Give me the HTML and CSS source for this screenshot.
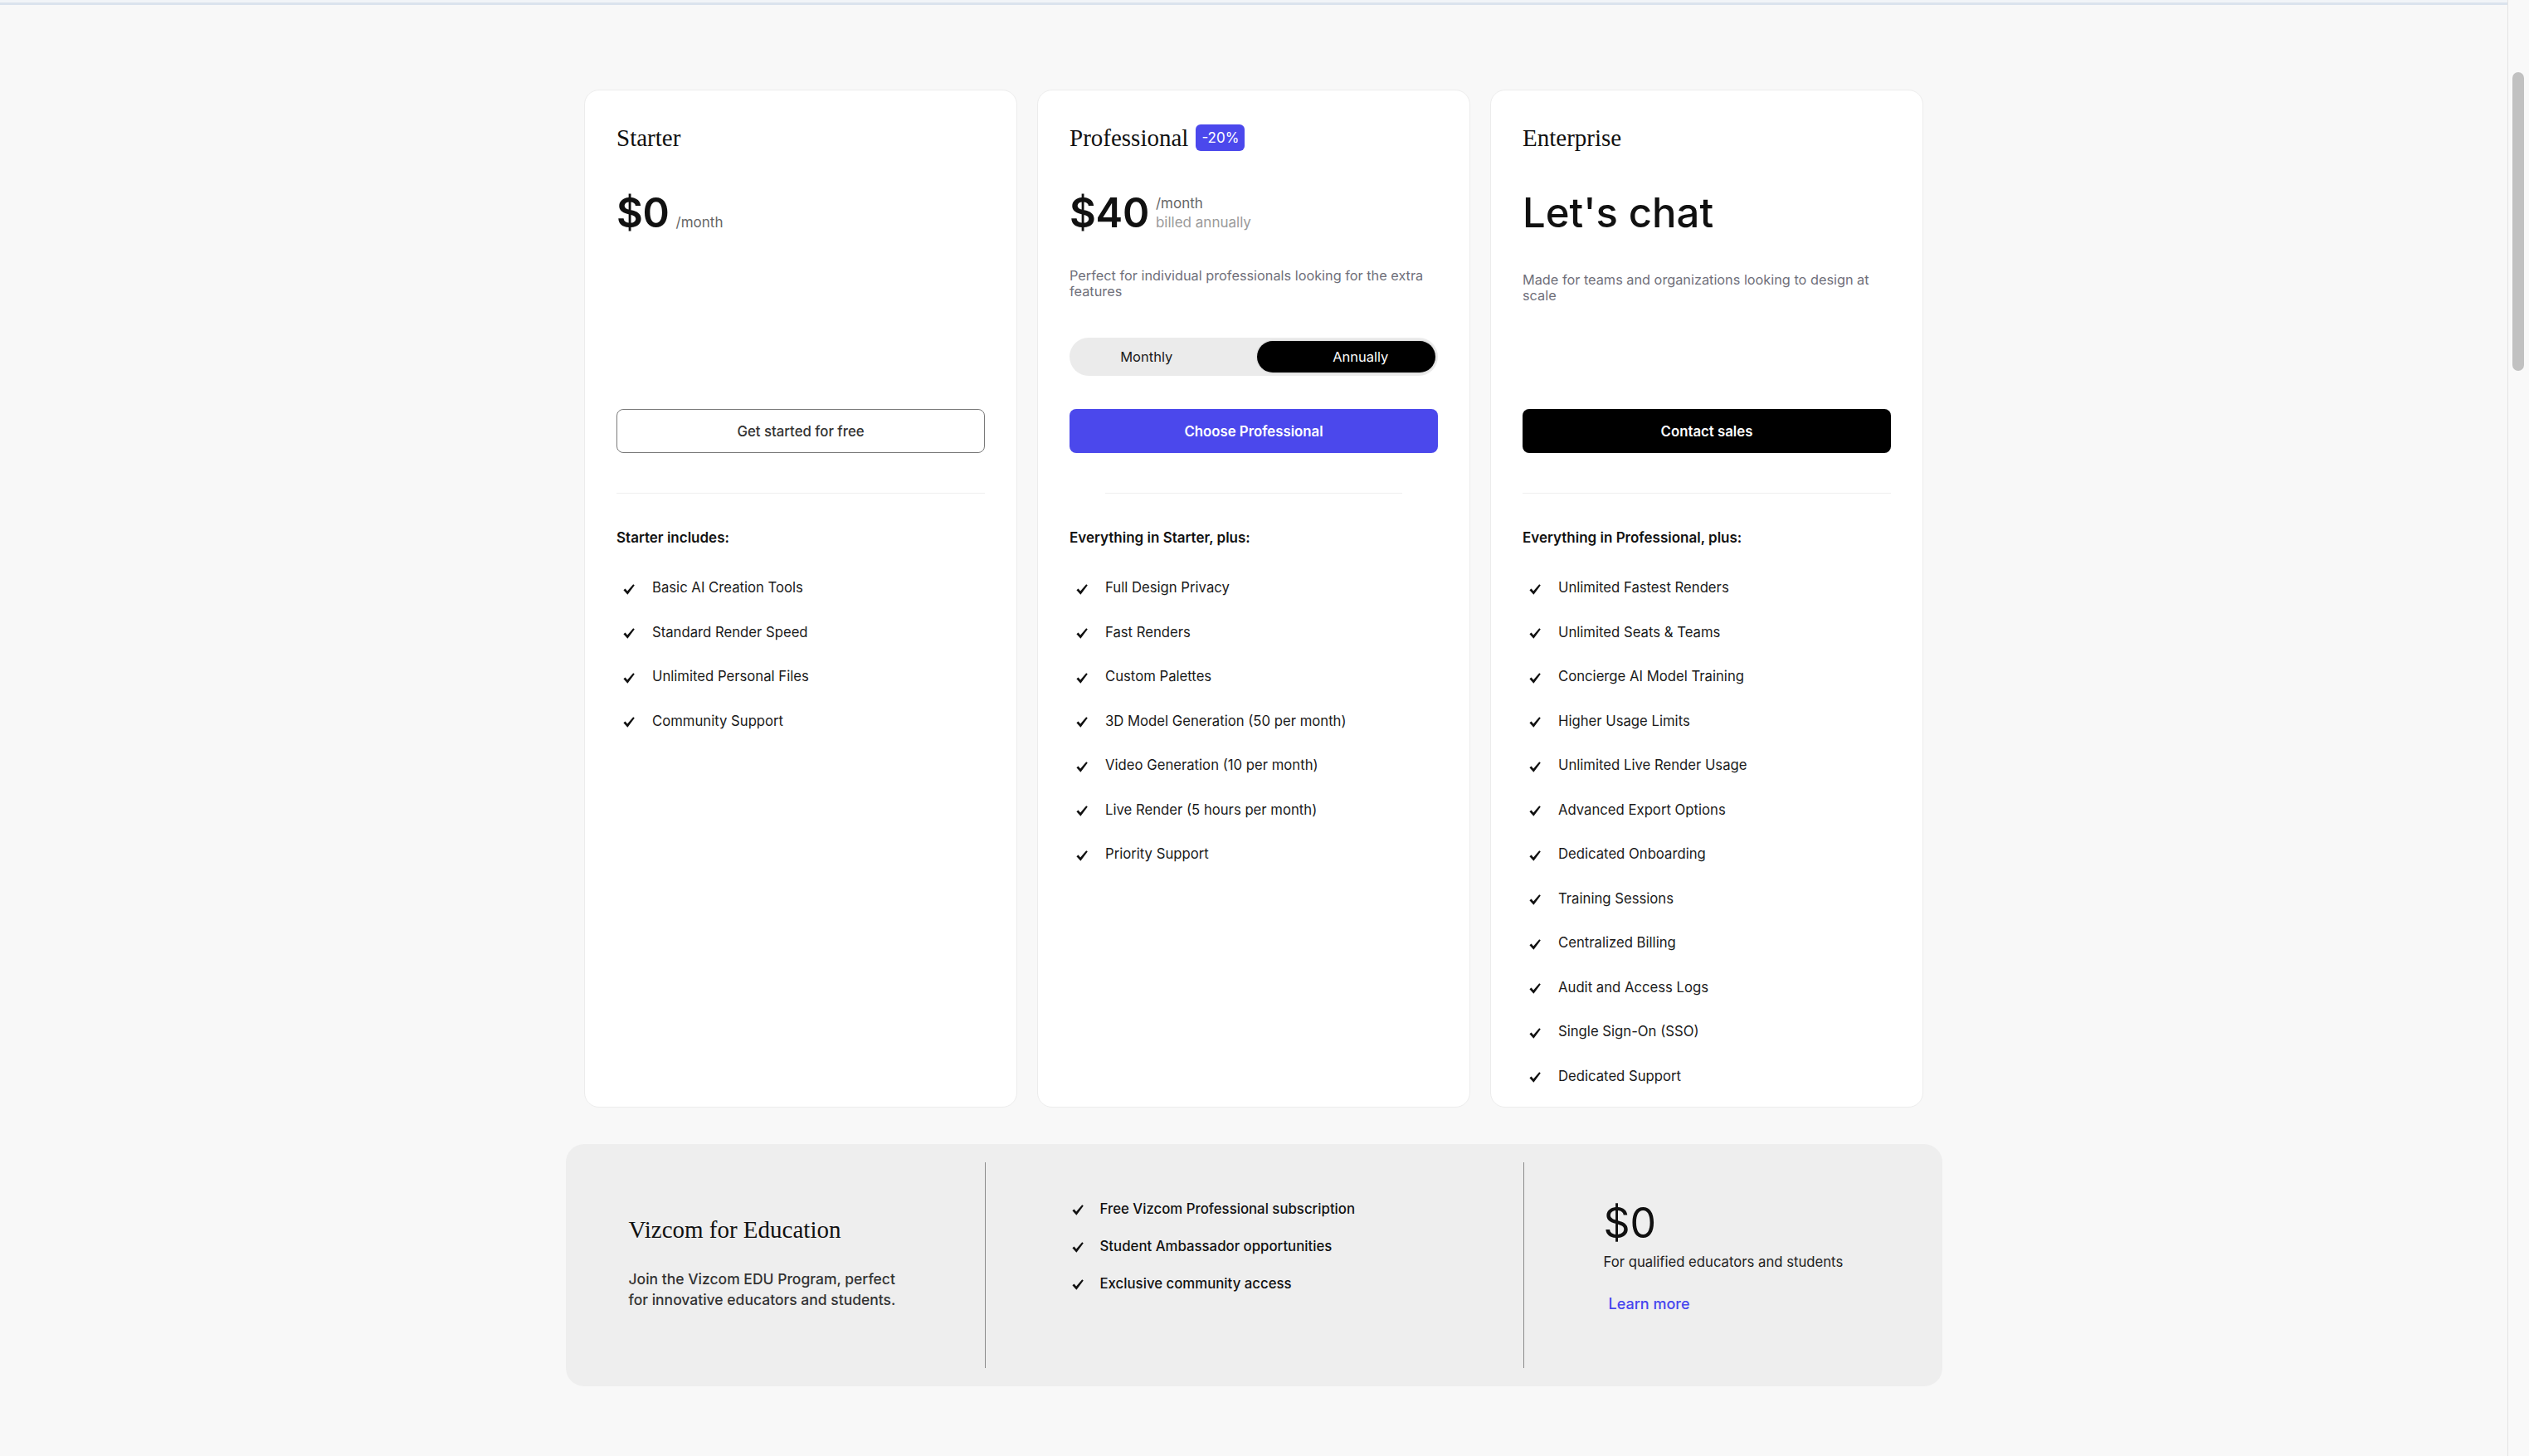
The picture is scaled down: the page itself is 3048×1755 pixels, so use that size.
FILE: index.html
```html
<!DOCTYPE html>
<html lang="en">
<head>
<meta charset="utf-8">
<title>Vizcom Pricing</title>
<link rel="stylesheet" href="styles.css">
</head>
<body>
<div class="topline"></div>
<main class="pricing">
  <section class="plans">
    <article class="plan">
      <div class="plan-head">
        <div class="plan-title-row"><h2 class="plan-title">Starter</h2></div>
        <div class="price-row">
          <span class="price">$0</span>
          <span class="price-suffix"><span>/month</span></span>
        </div>
      </div>
      <a class="btn btn-outline" href="#">Get started for free</a>
      <hr class="plan-divider">
      <h3 class="feat-heading">Starter includes:</h3>
      <ul class="features">
        <li><svg class="check" viewBox="0 0 14 13"><path d="M0.4 7.2 L2.6 5.5 L5.1 8.6 L12.2 0.2 L13.8 1.4 L5.4 12.7 Z"/></svg>Basic AI Creation Tools</li>
        <li><svg class="check" viewBox="0 0 14 13"><path d="M0.4 7.2 L2.6 5.5 L5.1 8.6 L12.2 0.2 L13.8 1.4 L5.4 12.7 Z"/></svg>Standard Render Speed</li>
        <li><svg class="check" viewBox="0 0 14 13"><path d="M0.4 7.2 L2.6 5.5 L5.1 8.6 L12.2 0.2 L13.8 1.4 L5.4 12.7 Z"/></svg>Unlimited Personal Files</li>
        <li><svg class="check" viewBox="0 0 14 13"><path d="M0.4 7.2 L2.6 5.5 L5.1 8.6 L12.2 0.2 L13.8 1.4 L5.4 12.7 Z"/></svg>Community Support</li>
      </ul>
    </article>

    <article class="plan">
      <div class="plan-head">
        <div class="plan-title-row"><h2 class="plan-title">Professional</h2><span class="badge">-20%</span></div>
        <div class="price-row">
          <span class="price">$40</span>
          <span class="price-suffix"><span>/month</span><span class="muted">billed annually</span></span>
        </div>
        <p class="plan-desc">Perfect for individual professionals looking for the extra features</p>
        <div class="toggle">
          <span class="toggle-opt toggle-left">Monthly</span>
          <span class="toggle-opt toggle-right active">Annually</span>
        </div>
      </div>
      <a class="btn btn-primary" href="#">Choose Professional</a>
      <hr class="plan-divider plan-divider-inset">
      <h3 class="feat-heading">Everything in Starter, plus:</h3>
      <ul class="features">
        <li><svg class="check" viewBox="0 0 14 13"><path d="M0.4 7.2 L2.6 5.5 L5.1 8.6 L12.2 0.2 L13.8 1.4 L5.4 12.7 Z"/></svg>Full Design Privacy</li>
        <li><svg class="check" viewBox="0 0 14 13"><path d="M0.4 7.2 L2.6 5.5 L5.1 8.6 L12.2 0.2 L13.8 1.4 L5.4 12.7 Z"/></svg>Fast Renders</li>
        <li><svg class="check" viewBox="0 0 14 13"><path d="M0.4 7.2 L2.6 5.5 L5.1 8.6 L12.2 0.2 L13.8 1.4 L5.4 12.7 Z"/></svg>Custom Palettes</li>
        <li><svg class="check" viewBox="0 0 14 13"><path d="M0.4 7.2 L2.6 5.5 L5.1 8.6 L12.2 0.2 L13.8 1.4 L5.4 12.7 Z"/></svg>3D Model Generation (50 per month)</li>
        <li><svg class="check" viewBox="0 0 14 13"><path d="M0.4 7.2 L2.6 5.5 L5.1 8.6 L12.2 0.2 L13.8 1.4 L5.4 12.7 Z"/></svg>Video Generation (10 per month)</li>
        <li><svg class="check" viewBox="0 0 14 13"><path d="M0.4 7.2 L2.6 5.5 L5.1 8.6 L12.2 0.2 L13.8 1.4 L5.4 12.7 Z"/></svg>Live Render (5 hours per month)</li>
        <li><svg class="check" viewBox="0 0 14 13"><path d="M0.4 7.2 L2.6 5.5 L5.1 8.6 L12.2 0.2 L13.8 1.4 L5.4 12.7 Z"/></svg>Priority Support</li>
      </ul>
    </article>

    <article class="plan">
      <div class="plan-head">
        <div class="plan-title-row"><h2 class="plan-title">Enterprise</h2></div>
        <div class="lets-chat">Let's chat</div>
        <p class="plan-desc plan-desc-ent">Made for teams and organizations looking to design at scale</p>
      </div>
      <a class="btn btn-dark" href="#">Contact sales</a>
      <hr class="plan-divider">
      <h3 class="feat-heading">Everything in Professional, plus:</h3>
      <ul class="features">
        <li><svg class="check" viewBox="0 0 14 13"><path d="M0.4 7.2 L2.6 5.5 L5.1 8.6 L12.2 0.2 L13.8 1.4 L5.4 12.7 Z"/></svg>Unlimited Fastest Renders</li>
        <li><svg class="check" viewBox="0 0 14 13"><path d="M0.4 7.2 L2.6 5.5 L5.1 8.6 L12.2 0.2 L13.8 1.4 L5.4 12.7 Z"/></svg>Unlimited Seats &amp; Teams</li>
        <li><svg class="check" viewBox="0 0 14 13"><path d="M0.4 7.2 L2.6 5.5 L5.1 8.6 L12.2 0.2 L13.8 1.4 L5.4 12.7 Z"/></svg>Concierge AI Model Training</li>
        <li><svg class="check" viewBox="0 0 14 13"><path d="M0.4 7.2 L2.6 5.5 L5.1 8.6 L12.2 0.2 L13.8 1.4 L5.4 12.7 Z"/></svg>Higher Usage Limits</li>
        <li><svg class="check" viewBox="0 0 14 13"><path d="M0.4 7.2 L2.6 5.5 L5.1 8.6 L12.2 0.2 L13.8 1.4 L5.4 12.7 Z"/></svg>Unlimited Live Render Usage</li>
        <li><svg class="check" viewBox="0 0 14 13"><path d="M0.4 7.2 L2.6 5.5 L5.1 8.6 L12.2 0.2 L13.8 1.4 L5.4 12.7 Z"/></svg>Advanced Export Options</li>
        <li><svg class="check" viewBox="0 0 14 13"><path d="M0.4 7.2 L2.6 5.5 L5.1 8.6 L12.2 0.2 L13.8 1.4 L5.4 12.7 Z"/></svg>Dedicated Onboarding</li>
        <li><svg class="check" viewBox="0 0 14 13"><path d="M0.4 7.2 L2.6 5.5 L5.1 8.6 L12.2 0.2 L13.8 1.4 L5.4 12.7 Z"/></svg>Training Sessions</li>
        <li><svg class="check" viewBox="0 0 14 13"><path d="M0.4 7.2 L2.6 5.5 L5.1 8.6 L12.2 0.2 L13.8 1.4 L5.4 12.7 Z"/></svg>Centralized Billing</li>
        <li><svg class="check" viewBox="0 0 14 13"><path d="M0.4 7.2 L2.6 5.5 L5.1 8.6 L12.2 0.2 L13.8 1.4 L5.4 12.7 Z"/></svg>Audit and Access Logs</li>
        <li><svg class="check" viewBox="0 0 14 13"><path d="M0.4 7.2 L2.6 5.5 L5.1 8.6 L12.2 0.2 L13.8 1.4 L5.4 12.7 Z"/></svg>Single Sign-On (SSO)</li>
        <li><svg class="check" viewBox="0 0 14 13"><path d="M0.4 7.2 L2.6 5.5 L5.1 8.6 L12.2 0.2 L13.8 1.4 L5.4 12.7 Z"/></svg>Dedicated Support</li>
      </ul>
    </article>
  </section>

  <section class="edu">
    <div class="edu-intro">
      <h2 class="edu-title">Vizcom for Education</h2>
      <p class="edu-text">Join the Vizcom EDU Program, perfect<br>for innovative educators and students.</p>
    </div>
    <div class="edu-perks">
      <ul class="perks">
        <li><svg class="check" viewBox="0 0 14 13"><path d="M0.4 7.2 L2.6 5.5 L5.1 8.6 L12.2 0.2 L13.8 1.4 L5.4 12.7 Z"/></svg>Free Vizcom Professional subscription</li>
        <li><svg class="check" viewBox="0 0 14 13"><path d="M0.4 7.2 L2.6 5.5 L5.1 8.6 L12.2 0.2 L13.8 1.4 L5.4 12.7 Z"/></svg>Student Ambassador opportunities</li>
        <li><svg class="check" viewBox="0 0 14 13"><path d="M0.4 7.2 L2.6 5.5 L5.1 8.6 L12.2 0.2 L13.8 1.4 L5.4 12.7 Z"/></svg>Exclusive community access</li>
      </ul>
    </div>
    <div class="edu-price">
      <div class="edu-amount">$0</div>
      <div class="edu-note">For qualified educators and students</div>
      <a class="edu-link" href="#">Learn more</a>
    </div>
  </section>
</main>
<div class="scroll-rail" aria-hidden="true"><div class="scroll-thumb"></div></div>
</body>
</html>
```

FILE: styles.css
```css
* { box-sizing: border-box; }

html {
  background: #f8f8f8;
}

body {
  margin: 0;
  padding-right: 26px;
  font-family: Inter, "Noto Sans", "Liberation Sans", sans-serif;
  color: #111;
  background: #f8f8f8;
}

/* window scroll rail drawn over the right edge */
.scroll-rail {
  position: fixed;
  top: 0;
  right: 0;
  bottom: 0;
  width: 26px;
  padding: 87px 6px 0 5px;
  background: #f9f9f9;
  border-left: 1px solid #e4e4e4;
}

.scroll-thumb {
  height: 360px;
  border-radius: 7px;
  background: #c1c1c1;
}

.topline {
  height: 6px;
  background: #f1f4f8;
  border-bottom: 3px solid #dbe3ed;
}

.pricing {
  display: flex;
  flex-direction: column;
  align-items: center;
  padding: 102px 0 80px;
}

/* ---------- plan cards ---------- */
.plans {
  display: grid;
  grid-template-columns: repeat(3, 522px);
  gap: 24px;
}

.plan {
  background: #fff;
  border: 1px solid #ececec;
  border-radius: 18px;
  padding: 39px 38px 25px;
  display: flex;
  flex-direction: column;
}

.plan-head {
  min-height: 345px;
  display: flex;
  flex-direction: column;
}

.plan-title-row {
  display: flex;
  align-items: center;
  gap: 9px;
  height: 36px;
}

.plan-title {
  margin: 0;
  font-family: "Liberation Serif", "Times New Roman", serif;
  font-weight: 400;
  font-size: 29px;
  line-height: 36px;
  color: #111;
}

.badge {
  height: 32px;
  padding: 0 7px;
  border-radius: 6px;
  background: #4b48ec;
  color: #fff;
  font-size: 17px;
  line-height: 32px;
}

.price-row {
  display: flex;
  align-items: flex-end;
  gap: 8px;
  margin-top: 48px;
}

.price {
  font-size: 49px;
  line-height: 49px;
  font-weight: 600;
  letter-spacing: -0.3px;
  color: #111;
}

.price-suffix {
  display: flex;
  flex-direction: column;
  font-size: 17px;
  line-height: 23px;
  padding-bottom: 1px;
  color: #666;
}

.price-suffix .muted {
  color: #9a9a9a;
}

.lets-chat {
  margin-top: 48px;
  font-size: 49px;
  line-height: 49px;
  font-weight: 500;
  color: #111;
}

.plan-desc {
  margin: 42px 0 0;
  font-size: 16.3px;
  line-height: 19px;
  color: #6f6f7a;
}

.plan-desc-ent {
  margin-top: 47px;
}

.toggle {
  margin-top: 46px;
  height: 46px;
  display: grid;
  grid-template-columns: 1fr 1fr;
  gap: 6px;
  padding: 4px 3px 4px 4px;
  border-radius: 23px;
  background: #ebebeb;
}

.toggle-opt {
  display: flex;
  align-items: center;
  justify-content: center;
  border-radius: 19px;
  font-size: 16.5px;
  color: #1a1a1a;
}

.toggle-left {
  padding-right: 38px;
}

.toggle-right {
  padding-left: 35px;
}

.toggle-opt.active {
  background: #000;
  color: #fff;
  box-shadow: 0 0 0 1.5px #e1e1e1;
}

.btn {
  display: flex;
  align-items: center;
  justify-content: center;
  height: 53px;
  border-radius: 8px;
  font-size: 16.8px;
  font-weight: 500;
  text-decoration: none;
}

.btn-outline {
  border: 1px solid #7a7a7a;
  color: #333;
  background: #fff;
}

.btn-primary {
  background: #4b48ec;
  color: #fff;
  font-weight: 600;
}

.btn-dark {
  background: #000;
  color: #fff;
  font-weight: 600;
}

.plan-divider {
  border: 0;
  height: 1px;
  background: #efefef;
  margin: 48px 0 0;
}

.plan-divider-inset {
  margin-left: 43px;
  margin-right: 43px;
}

.feat-heading {
  margin: 43px 0 0;
  font-size: 17px;
  line-height: 20px;
  font-weight: 600;
  color: #111;
}

.features {
  list-style: none;
  margin: 38px 0 0;
  padding: 0;
  display: flex;
  flex-direction: column;
  gap: 29.5px;
}

.features li {
  display: flex;
  align-items: center;
  gap: 21px;
  padding-left: 8px;
  font-size: 16.7px;
  line-height: 24px;
  color: #1a1a1a;
}

.check {
  width: 14px;
  height: 13px;
  flex: none;
  fill: #111;
  margin-top: 4px;
}

/* ---------- education ---------- */
.edu {
  margin-top: 44px;
  width: 1659px;
  height: 292px;
  display: flex;
  padding: 22px 0;
  border-radius: 22px;
  background: #eeeeee;
}

.edu-intro {
  width: 505px;
  padding: 63px 0 0 76px;
}

.edu-title {
  margin: 0;
  font-family: "Liberation Serif", "Times New Roman", serif;
  font-weight: 400;
  font-size: 29px;
  line-height: 36px;
  color: #111;
}

.edu-text {
  margin: 29px 0 0;
  font-size: 17.5px;
  line-height: 25px;
  font-weight: 500;
  color: #333;
}

.edu-perks {
  width: 650px;
  border-left: 1px solid #8c8c8c;
  border-right: 1px solid #8c8c8c;
  padding: 44px 0 0 104px;
}

.perks {
  list-style: none;
  margin: 0;
  padding: 0;
  display: flex;
  flex-direction: column;
  gap: 21px;
}

.perks li {
  display: flex;
  align-items: center;
  gap: 20px;
  font-size: 16.8px;
  line-height: 24px;
  font-weight: 500;
  color: #111;
}

.edu-price {
  flex: 1;
  padding: 47px 0 0 96px;
  display: flex;
  flex-direction: column;
  align-items: flex-start;
}

.edu-amount {
  font-size: 50px;
  line-height: 52px;
  font-weight: 400;
  color: #111;
}

.edu-note {
  margin-top: 11px;
  font-size: 16.7px;
  line-height: 20px;
  color: #222;
}

.edu-link {
  margin: 29px 0 0 6px;
  font-size: 18px;
  line-height: 24px;
  font-weight: 500;
  color: #4646ee;
  text-decoration: none;
}
```
